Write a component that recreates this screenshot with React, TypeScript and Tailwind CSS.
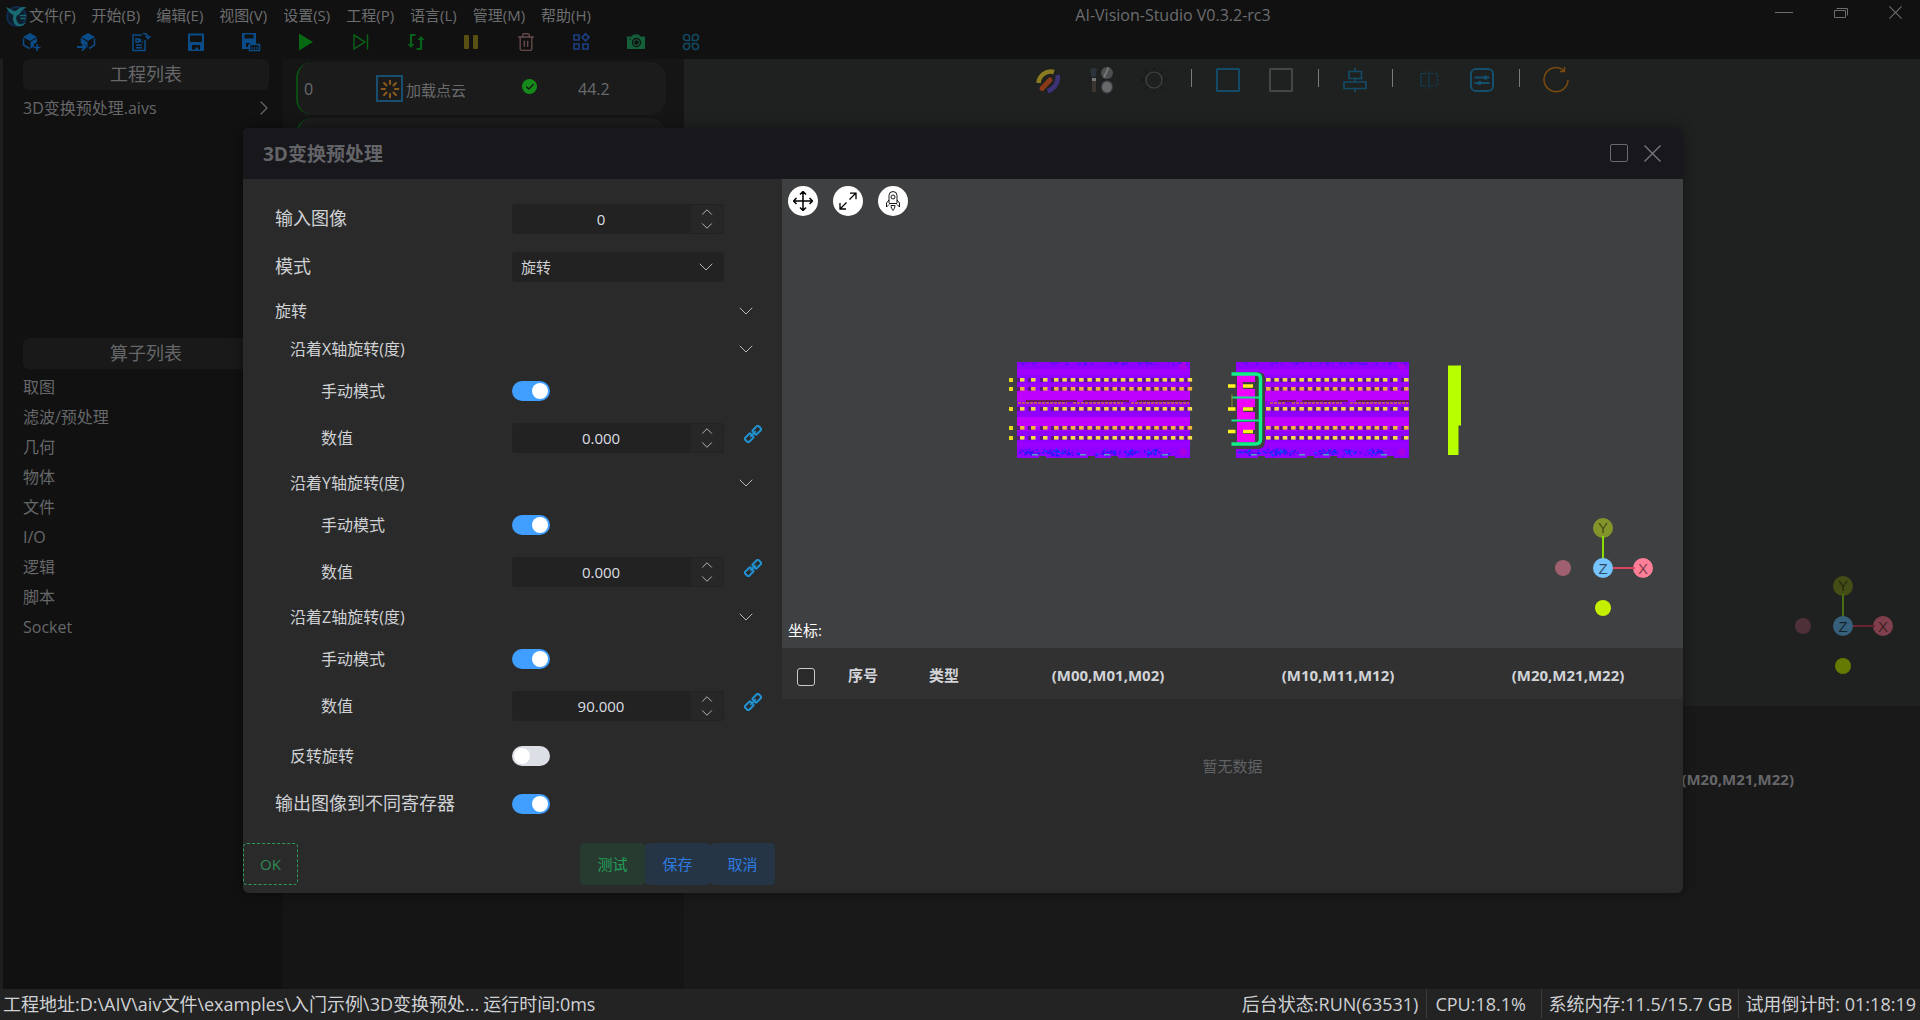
import React, { useId, useState } from "react";
import { Check, ChevronDown, ChevronRight, ChevronUp, Loader, Trash2 } from "lucide-react";

/* ---------- toolbar icons ---------- */

type IconProps = { className?: string };

const box = "size-5";

const CubeAdd = () => (
  <svg viewBox="0 0 20 20" className={box} fill="none">
    <path d="M9 1 2 5l7 4 7-4z" fill="#0b4c88" />
    <path d="M2.500 6.500v6.500l6 3.500" stroke="#0b4c88" strokeWidth="1.500" />
    <path d="M9.500 10l6.500-4v4l-3 2v2.500l-3.500 2z" fill="#0b4c88" />
    <path d="M16 12v7M12.500 15.500h7" stroke="#0b4c88" strokeWidth="1.600" />
  </svg>
);
const CubeImport = () => (
  <svg viewBox="0 0 20 20" className={box} fill="none">
    <path d="M12 1 5 5l7 4 7-4z" fill="#0b4c88" />
    <path d="M5.500 6v5M18.500 6.500v6.500L13 16.500" stroke="#0b4c88" strokeWidth="1.500" />
    <path d="M5 6l6.500 4v6L9.500 13 5 11z" fill="#0b4c88" />
    <path d="M1 15h8M6 11.500 9.500 15 6 18.500" stroke="#0b4c88" strokeWidth="1.800" />
  </svg>
);
const DocExport = () => (
  <svg viewBox="0 0 20 20" className={box} fill="none" stroke="#0b4c88" strokeWidth="1.500">
    <path d="M11 3H2v15.500h12V8" />
    <path d="M5 7h3v3H5zM5 13h6M5 15.800h6M9.500 7v3M11 10h1" />
    <path d="M12 1.500c3 0 5 1 5 4M14.500 4l2.500 2.500L19.500 4" />
  </svg>
);
const SaveIcon = () => (
  <svg viewBox="0 0 20 20" className={box} fill="none">
    <path d="M2 1.500h16V19H2z" fill="#0b4c88" />
    <path d="M4 3.500h12v6.500H4zM6 13h8v4.500h-2v-2H9.500v2H6z" fill="#111" />
  </svg>
);
const SaveAsIcon = () => (
  <svg viewBox="0 0 20 20" className={box} fill="none">
    <path d="M1 1h14v16H1z" fill="#0b4c88" />
    <path d="M3.500 2.500h9v4h-9zM5 11h4v2H7v2H5z" fill="#111" />
    <path d="M8.500 12.500h10v6h-10z" fill="#111" stroke="#0b4c88" strokeWidth="1.500" />
    <path d="M11 15v2M13.500 15v2M16 15v2" stroke="#0b4c88" strokeWidth="1.200" />
  </svg>
);
const PlayIcon = () => (
  <svg viewBox="0 0 20 20" className={box}>
    <path d="M3 1.500 17 10 3 18.500z" fill="#066a12" />
  </svg>
);
const StepIcon = () => (
  <svg viewBox="0 0 20 20" className={box} fill="none" stroke="#0a5f17" strokeWidth="1.500">
    <path d="M3 3 14 10 3 17zM16.500 2.500v15" />
  </svg>
);
const LoopIcon = () => (
  <svg viewBox="0 0 20 20" className={box} fill="none" stroke="#08611a" strokeWidth="2.200">
    <path d="M9.500 3H5v10M10.500 17H15V7" />
    <path d="M1.500 12h7L5 16zM11.500 8h7L15 4z" fill="#08611a" stroke="none" />
  </svg>
);
const PauseIcon = () => (
  <svg viewBox="0 0 20 20" className={box} fill="#594f12">
    <rect x="3" y="3" width="5" height="14" rx="1" />
    <rect x="12" y="3" width="5" height="14" rx="1" />
  </svg>
);
const AppsIcon = () => (
  <svg viewBox="0 0 20 20" className={box} fill="none" stroke="#1b3f80" strokeWidth="1.700">
    <path d="M3 3h5v5H3zM3 12h5v5H3zM12 12h5v5h-5zM14.500 1.800 18 5.300l-3.500 3.500L11 5.300z" />
  </svg>
);
const CameraIcon = () => (
  <svg viewBox="0 0 20 20" className={box}>
    <path d="M1 4.500h5L7 2.500h6l1 2h5V17H1z" fill="#14603a" />
    <circle cx="10.500" cy="10.500" r="4" fill="none" stroke="#111" strokeWidth="1.300" />
    <circle cx="10.500" cy="10.500" r="2.300" fill="#111" />
    <circle cx="4" cy="7" r=".8" fill="#111" />
  </svg>
);
const CloverIcon = () => (
  <svg viewBox="0 0 20 20" className={box} fill="none" stroke="#134a63" strokeWidth="1.600">
    <path d="M8.500 8.500H5.500a3 3 0 1 1 3-3zM11.500 8.500v-3a3 3 0 1 1 3 3zM8.500 11.500v3a3 3 0 1 1-3-3zM11.500 11.500h3a3 3 0 1 1-3 3z" />
  </svg>
);
const TrashIcon = () => <Trash2 className="size-5 text-[#634a49]" strokeWidth={1.700} />;

const toolbar: [string, React.FC][] = [
  ["新建工程", CubeAdd],
  ["导入工程", CubeImport],
  ["导出", DocExport],
  ["保存", SaveIcon],
  ["另存为", SaveAsIcon],
  ["运行", PlayIcon],
  ["单步", StepIcon],
  ["循环", LoopIcon],
  ["暂停", PauseIcon],
  ["删除", TrashIcon],
  ["应用", AppsIcon],
  ["截图", CameraIcon],
  ["布局", CloverIcon],
];

/* ---------- viewer icons ---------- */

const big = "size-7";

const PaletteIcon = () => (
  <svg viewBox="0 0 28 28" className={big} fill="none" strokeLinecap="butt">
    <path d="M4.500 17C5 10 12 3.500 20 6" stroke="#8a7a20" strokeWidth="4.500" />
    <path d="M23.500 9c1.500 6-2.500 14-10 16" stroke="#3b3278" strokeWidth="4.500" />
    <path d="M8 22.500 16 14" stroke="#8a3a18" strokeWidth="5" strokeLinecap="round" />
  </svg>
);
const BrushIcon = () => (
  <svg viewBox="0 0 28 28" className={big} fill="none">
    <path d="M3 3c2-1.500 5-1.500 7 0L8.500 11h-4z" fill="#2c333b" />
    <path d="M5 12h4v3H5z" fill="#777" />
    <path d="M5 15h4v11H5z" fill="#3b3632" />
    <circle cx="20" cy="7" r="6" fill="#4c4e50" />
    <path d="M17 11.500 21.500 1.500" stroke="#777" strokeWidth="2" />
    <ellipse cx="20" cy="21" rx="6.300" ry="6.800" fill="#34383e" />
    <ellipse cx="20" cy="21" rx="5" ry="5.500" fill="#66686a" />
  </svg>
);
const SunIcon = () => (
  <svg viewBox="0 0 28 28" className={big} fill="none">
    <circle cx="14" cy="14" r="8" stroke="#434543" strokeWidth="1.200" />
    <path d="M14 1.500v3M14 23.500v3M1.500 14h3M23.500 14h3M5 5l2 2M21 21l2 2M23 5l-2 2M7 21l-2 2" stroke="#151716" strokeWidth="1.500" />
  </svg>
);
const SquareShape = ({ className }: IconProps) => (
  <svg viewBox="0 0 28 28" className={className} fill="none" stroke="currentColor" strokeWidth="2">
    <rect x="3" y="3" width="22" height="22" rx=".5" />
  </svg>
);
const BlueSquare = () => <SquareShape className="size-7 text-[#134b67]" />;
const GreySquare = () => <SquareShape className="size-7 text-[#454545]" />;
const AlignIcon = () => (
  <svg viewBox="0 0 28 28" className={big} fill="none" stroke="#134b67" strokeWidth="1.700">
    <path d="M14 2v3M14 12.500V16M14 22.500V26M8 5.500h12.500v7H8zM3 16h22v6.500H3z" />
  </svg>
);
const MirrorIcon = () => (
  <svg viewBox="0 0 28 28" className={big} fill="none" stroke="#133d52" strokeWidth="1.200">
    <path d="M14 5v18M12 7.500H6v12.500h6" />
    <path d="M15.500 7.500h7v12.500h-7" strokeDasharray="2.500 1.500" />
  </svg>
);
const SettingsIcon = () => (
  <svg viewBox="0 0 28 28" className={big} fill="none" stroke="#13506e" strokeWidth="2">
    <rect x="3" y="3" width="22" height="22" rx="5" />
    <path d="M6.500 11.500h15M6.500 17h15" />
    <path d="M17.500 9.500v4M11.500 15v4" strokeWidth="3" />
  </svg>
);
const RotateIcon = () => (
  <svg viewBox="0 0 28 28" className={big} fill="none" stroke="#7a4a10" strokeWidth="1.500">
    <path d="M26 14A12 12 0 1 1 22 4.700M22.500 1v4.500H18" />
  </svg>
);

const viewerTools: ([string, React.FC] | null)[] = [
  ["调色", PaletteIcon],
  ["画笔", BrushIcon],
  ["亮度", SunIcon],
  null,
  ["矩形", BlueSquare],
  ["方框", GreySquare],
  null,
  ["对齐", AlignIcon],
  null,
  ["镜像", MirrorIcon],
  ["参数", SettingsIcon],
  null,
  ["重置", RotateIcon],
];

const Logo = () => (
  <svg viewBox="0 0 24 24" className="size-6 shrink-0" fill="none" aria-hidden="true">
    <circle cx="11.500" cy="12.500" r="9.500" fill="#0e1c2c" stroke="#102c4c" strokeWidth="2" />
    <path d="M1 3c3 1 5 3 8 4 2 .5 3-1 5-2.500C16 3 19 2.500 22 4c-3 0-5 2-6 4-1 2-3 3-4.500 4-1 2 0 5 1.500 7 2 2 5 2 8-1-2 5-9 6-12 1-1.500-3-1-6-.500-8C6 10 3 7 1 3z" fill="#1a6a72" />
    <path d="M15 11.500h6M15.500 14.500h5" stroke="#1a6a72" strokeWidth="1.700" />
  </svg>
);

const CloseMark = ({ className }: IconProps) => (
  <svg viewBox="0 0 17 17" className={className} fill="none" stroke="currentColor" strokeWidth="1.400">
    <path d="M.5.5l16 16M16.500.5l-16 16" />
  </svg>
);

const LinkIcon = () => (
  <svg viewBox="0 0 18 18" className="size-[18px]" fill="none" stroke="#2191cf" strokeWidth="2">
    <g transform="rotate(-45 9 9)">
      <rect x="-.5" y="6.200" width="8" height="5.600" rx="1" />
      <rect x="10.500" y="6.200" width="8" height="5.600" rx="1" />
      <path d="M5 9h8" strokeWidth="1.800" />
    </g>
  </svg>
);

/* ---------- axis gizmo ---------- */

function Gizmo({ dim = false }: { dim?: boolean }) {
  const c = dim
    ? { y: "#454d16", yl: "#496e10", ym: "#647a02", z: "#36607c", x: "#803f4c", xl: "#6b2230", xm: "#4d3038" }
    : { y: "#83942a", yl: "#8adc00", ym: "#c4f000", z: "#76c4ff", x: "#ff7f99", xl: "#d94560", xm: "#a06070" };
  return (
    <svg viewBox="0 0 100 100" className="size-[100px]" aria-label="坐标轴">
      <circle cx="50" cy="10" r="10" fill={c.y} />
      <path d="M50 50V18" stroke={c.yl} strokeWidth="2" />
      <circle cx="90" cy="50" r="10" fill={c.x} />
      <path d="M50 50H82" stroke={c.xl} strokeWidth="2" />
      <circle cx="10" cy="50" r="8" fill={c.xm} />
      <circle cx="50" cy="90" r="8" fill={c.ym} />
      <circle cx="50" cy="50" r="10" fill={c.z} />
      <g fontFamily="Liberation Sans, sans-serif" fontSize="15" textAnchor="middle" fill="#000">
        <text x="50" y="15" fillOpacity=".5">Y</text>
        <text x="50" y="55.500" fillOpacity=".65">Z</text>
        <text x="90" y="55.500" fillOpacity=".55">X</text>
      </g>
    </svg>
  );
}

/* ---------- point cloud ---------- */

function noise(seed: number) {
  let s = seed;
  return () => {
    s = (s * 16807) % 2147483647;
    return s / 2147483647;
  };
}

const rowsY = [380, 389, 409, 428, 438];
const rowFill = ["#f5dc4e", "#f0b040", "#f8d84a", "#f2b83c", "#f5e04a"];

function Board({ x, dots, seed, lineStart }: { x: number; dots: number[]; seed: number; lineStart: number }) {
  const rnd = noise(seed);
  const clusters = [12, 36, 50, 90, 112, 138];
  const specks = Array.from({ length: 170 }, () => {
    const c = clusters[Math.floor(rnd() * clusters.length)];
    return [
      x + Math.min(168, Math.max(2, c + (rnd() + rnd() - 1) * 13)),
      448 + (rnd() + rnd()) * 4,
      1 + rnd() * 1.500,
      rnd(),
    ];
  });
  const topSpecks = Array.from({ length: 45 }, () => [x + 3 + rnd() * 166, 362 + rnd() * 2, 1 + rnd() * 2]);
  return (
    <g>
      <rect x={x} y="362" width="173" height="96" fill="#9000ff" />
      <rect x={x} y="369" width="173" height="6" fill="#a000ff" />
      <rect x={x} y="383" width="173" height="5" fill="#9c00ff" />
      <rect x={x} y="390" width="173" height="11" fill="#be00ff" />
      <rect x={x} y="401" width="173" height="5" fill="#9a00f0" />
      <rect x={x} y="417" width="173" height="10" fill="#c000ff" />
      <rect x={x} y="427" width="173" height="4" fill="#a800ff" />
      <rect x={x} y="442" width="173" height="5" fill="#9a00ff" />
      <circle cx={x + 166} cy="366" r="4" fill="#a800e6" />
      <circle cx={x + 166} cy="452" r="4" fill="#a800e6" />
      <path d={`M${lineStart + 8} 401H${x + 60}M${x + 66} 401H${x + 112}M${x + 120} 401H${x + 173}`} stroke="#6a1a5a" strokeWidth="2" />
      <path d={`M${lineStart} 403H${x + 50}M${x + 56} 403H${x + 106}M${x + 114} 403H${x + 172}`} stroke="#c87048" strokeWidth="1.500" strokeDasharray="3 1" />
      {topSpecks.map(([a, b, w], i) => (
        <rect key={i} x={a} y={b} width={w} height="1.200" fill="#4a10f0" />
      ))}
      {specks.map(([a, b, w, k], i) => (
        <rect key={i} x={a} y={b} width={w} height="1.500" fill={k > 0.6 ? "#1a20ff" : k > 0.2 ? "#4a08f0" : "#0a50f0"} />
      ))}
      {[18, 66, 90, 148].map((d) => (
        <rect key={d} x={x + d - 3} y="454" width="6" height="1.500" fill="#5aa0c0" />
      ))}
      {[25, 74, 97, 154].map((d) => (
        <rect key={d} x={x + d - 3} y="456" width="7" height="2" fill="#3f4041" />
      ))}
      {rowsY.map((y, r) =>
        dots.map((d) => (
          <g key={`${r}-${d}`}>
            <rect x={d - 5} y={y - 2} width="4" height="4" fill="#5a1880" />
            <rect x={d - 2} y={y - 2} width="4.500" height="3.600" fill={rowFill[r]} />
          </g>
        )),
      )}
    </g>
  );
}

const dotsA = [1022, 1033, 1045, ...Array.from({ length: 17 }, (_, i) => 1056 + i * 8.350)];
const dotsB = [...Array.from({ length: 15 }, (_, i) => 1268 + i * 8.350), 1395, 1406];

function PointCloud() {
  return (
    <svg viewBox="782 179 901 469" className="block h-full w-full" aria-label="点云">
      <Board x={1017} dots={dotsA} seed={17} lineStart={1018} />
      {rowsY.map((y) => (
        <rect key={y} x="1009" y={y - 2} width="4" height="4" fill="#e8d820" />
      ))}
      <Board x={1236} dots={dotsB} seed={91} lineStart={1270} />
      <path d="M1236 372h22q7 0 7 7v62q0 8-7 8h-22z" fill="#3f4041" />
      <path d="M1237 374h18v8h-18zM1237 389h18v8h-18zM1237 399h18v8h-18zM1237 412h18v8h-18zM1237 422h18v8h-18zM1237 434h18v8h-18z" fill="#f000ff" />
      <path d="M1237 382h6v7h-6zM1237 397h18v2h-18zM1237 407h6v5h-6zM1237 430h6v4h-6z" fill="#e000f0" />
      <path d="M1231.500 374H1256q4.500 0 4.500 4.500V439q0 5-5 5h-24" fill="none" stroke="#10f08a" strokeWidth="3.500" />
      <path d="M1231.500 397.500H1259M1231.500 420.500H1259" stroke="#10e890" strokeWidth="2" />
      <path d="M1232 394v14" stroke="#8a8a20" strokeWidth="1" />
      <path d="M1228 386h7.500M1228 409h7.500M1228 431.500h7.500M1243 386h10M1243 409h10M1243 431.500h10" stroke="#fff020" strokeWidth="3.500" />
      <path d="M1448 365.500h13v60h-2.500V455H1448z" fill="#b8ff00" />
    </svg>
  );
}

/* ---------- form controls ---------- */

function NumberBox({ id, initial, label, decimals = 0 }: { id: string; initial: number; label: string; decimals?: number }) {
  const [text, setText] = useState(initial.toFixed(decimals));
  const step = (d: number) => setText((Number(text) + d).toFixed(decimals));
  return (
    <div className="flex h-[30px] w-[212px] overflow-hidden rounded bg-[#222] p-px">
      <input
        id={id}
        aria-label={label}
        value={text}
        onChange={(e) => setText(e.target.value)}
        className="min-w-0 flex-1 bg-transparent pr-0.5 text-center text-[15px] font-medium text-[#dcdee2] outline-none"
      />
      <div className="flex w-8 flex-col rounded-r bg-[#272727] text-[#b5b7ba]">
        <button aria-label="增加" onClick={() => step(1)} className="flex h-3.5 items-center justify-center">
          <ChevronUp className="size-[18px]" strokeWidth={1.300} />
        </button>
        <button aria-label="减少" onClick={() => step(-1)} className="flex h-3.5 items-center justify-center">
          <ChevronDown className="size-[18px]" strokeWidth={1.300} />
        </button>
      </div>
    </div>
  );
}

function Switch({ id, initial }: { id: string; initial: boolean }) {
  const [on, setOn] = useState(initial);
  return (
    <input
      id={id}
      type="checkbox"
      role="switch"
      checked={on}
      onChange={() => setOn(!on)}
      className="flex h-5 w-[38px] appearance-none items-center rounded-full bg-[#dcdfe6] px-0.5 before:size-4 before:rounded-full before:bg-white checked:justify-end checked:bg-[#409eff]"
    />
  );
}

function SwitchRow({ label, on, labelClass, rowClass }: { label: string; on: boolean; labelClass: string; rowClass: string }) {
  const id = useId();
  return (
    <div className={`flex items-center ${rowClass}`}>
      <label htmlFor={id} className={`w-[269px] shrink-0 ${labelClass}`}>
        {label}
      </label>
      <Switch id={id} initial={on} />
    </div>
  );
}

function SectionHead({ label, className }: { label: string; className: string }) {
  return (
    <button className={`flex h-10 w-full items-center justify-between pr-6 text-left text-base ${className}`}>
      {label}
      <ChevronDown className="size-6 text-[#b4b6ba]" strokeWidth={1} />
    </button>
  );
}

function AxisSection({ axis, value }: { axis: string; value: number }) {
  const id = useId();
  return (
    <section>
      <SectionHead label={`沿着${axis}轴旋转(度)`} className="pb-1 pl-[47px]" />
      <SwitchRow label="手动模式" on labelClass="pl-[78px] text-base" rowClass="h-10" />
      <div className="flex h-[54px] items-center">
        <label htmlFor={id} className="w-[269px] shrink-0 pl-[78px] text-base">
          数值
        </label>
        <NumberBox id={id} initial={value} label={`${axis}轴数值`} decimals={3} />
        <button aria-label="关联变量" className="ml-5 pb-2">
          <LinkIcon />
        </button>
      </div>
    </section>
  );
}

function ParameterForm() {
  return (
    <div className="flex w-[539px] shrink-0 flex-col pt-4 pb-2 text-[#cfd1d4]">
      <div className="flex h-12 items-center">
        <label htmlFor="input-image" className="w-[269px] pb-0.5 pl-8 text-lg">
          输入图像
        </label>
        <NumberBox id="input-image" initial={0} label="输入图像" />
      </div>
      <div className="flex h-12 items-center">
        <label htmlFor="mode" className="w-[269px] pb-0.5 pl-8 text-lg">
          模式
        </label>
        <div className="relative w-[212px]">
          <select id="mode" className="h-[30px] w-full appearance-none rounded bg-[#222] pl-[9px] text-[15px] outline-none">
            <option>旋转</option>
          </select>
          <ChevronDown className="pointer-events-none absolute top-[3px] right-1.5 size-6 text-[#b4b6ba]" strokeWidth={1} />
        </div>
      </div>
      <SectionHead label="旋转" className="pl-8" />
      <AxisSection axis="X" value={0} />
      <AxisSection axis="Y" value={0} />
      <AxisSection axis="Z" value={90} />
      <SwitchRow label="反转旋转" on={false} labelClass="pl-[47px] text-base" rowClass="h-[46px]" />
      <SwitchRow label="输出图像到不同寄存器" on labelClass="pb-0.5 pl-8 text-lg" rowClass="h-[50px]" />
      <div className="mt-3.5 flex h-[42px] justify-between pr-[7px] text-[15px]">
        <button className="w-[55px] rounded border border-dashed border-[#2f9a5c] text-[#2f8a55]">OK</button>
        <div className="flex">
          <button className="w-[65px] rounded bg-[#273a2f] text-[#22a05a]">测试</button>
          <button className="w-[65px] rounded bg-[#263546] text-[#2d7be0]">保存</button>
          <button className="w-[65px] rounded bg-[#263546] text-[#2d7be0]">取消</button>
        </div>
      </div>
    </div>
  );
}

const roundBtn = "flex size-[30px] items-center justify-center rounded-full bg-white text-black";

function ModalViewer() {
  return (
    <div className="flex min-w-0 flex-1 flex-col">
      <div className="relative h-[469px] bg-[#3f4041]">
        <PointCloud />
        <div className="absolute top-[7px] left-1.5 flex gap-[15px]">
          <button aria-label="平移" className={roundBtn}>
            <svg viewBox="0 0 20 20" className="size-5" fill="none" stroke="currentColor" strokeWidth="1.500">
              <path d="M10 .8v18.400M.8 10h18.400M7 3.500l3-3 3 3M7 16.500l3 3 3-3M3.500 7l-3 3 3 3M16.500 7l3 3-3 3" />
            </svg>
          </button>
          <button aria-label="全屏" className={roundBtn}>
            <svg viewBox="0 0 20 20" className="size-5" fill="none" stroke="currentColor" strokeWidth="1.300">
              <path d="M11.500 8.500l6-6M12 2.200h6v6M8.500 11.500l-6.500 6.500M2 12v6h6" />
            </svg>
          </button>
          <button aria-label="复位" className={roundBtn}>
            <svg viewBox="0 0 20 20" className="size-5" fill="none" stroke="currentColor" strokeWidth=".9">
              <path d="M6 12V4.500a4 4 0 0 1 8 0V12M6 12.500h8M6 9l-2.500 3v4L6 13.500M14 9l2.500 3v4L14 13.500M8 14.500h4c0 2-1 3.500-2 5-1-1.500-2-3-2-5z" />
              <circle cx="10" cy="6" r="2" />
            </svg>
          </button>
        </div>
        <div className="absolute right-[30px] bottom-[30px]">
          <Gizmo />
        </div>
        <p className="absolute bottom-[7px] left-1.5 text-[15px] leading-[22px] text-white">坐标:</p>
      </div>
      <table className="w-full table-fixed text-[15px] text-[#d2d4d8]">
        <thead>
          <tr className="h-[51px] bg-[#313131]">
            <th className="w-[49px] pt-1.5">
              <input
                type="checkbox"
                aria-label="全选"
                className="ml-[15px] block size-[18px] appearance-none rounded-[3px] border border-[#c8cacd] bg-[#2a2a2a] checked:bg-[#409eff]"
              />
            </th>
            <th className="w-16 pt-1 font-bold">序号</th>
            <th className="w-[98px] pt-1 font-bold">类型</th>
            <th className="pt-1 font-bold">(M00,M01,M02)</th>
            <th className="pt-1 font-bold">(M10,M11,M12)</th>
            <th className="pt-1 font-bold">(M20,M21,M22)</th>
          </tr>
        </thead>
        <tbody>
          <tr>
            <td colSpan={6} className="h-[134px] text-center text-[#606265]">
              暂无数据
            </td>
          </tr>
        </tbody>
      </table>
    </div>
  );
}

function Modal() {
  return (
    <div className="absolute inset-0 flex items-start justify-center pt-32 pl-1.5">
      <div role="dialog" aria-label="3D变换预处理" className="w-[75vw] overflow-hidden rounded-md bg-[#2a2a2a] shadow-[0_0_12px_rgba(0,0,0,0.4)]">
        <header className="flex h-[51px] items-center justify-between bg-[#18171c] pr-[22px] pl-5 text-[#636468]">
          <h2 className="pt-0.5 text-[19px] font-bold">3D变换预处理</h2>
          <div className="flex items-center gap-4 pb-px">
            <button aria-label="最大化" className="size-[18px] rounded-[2px] border border-[#6a6a6e]" />
            <button aria-label="关闭">
              <CloseMark className="size-[17px] text-[#77777b]" />
            </button>
          </div>
        </header>
        <div className="flex">
          <ParameterForm />
          <ModalViewer />
        </div>
      </div>
    </div>
  );
}

/* ---------- main window ---------- */

const menus = ["文件(F)", "开始(B)", "编辑(E)", "视图(V)", "设置(S)", "工程(P)", "语言(L)", "管理(M)", "帮助(H)"];
const operators = ["取图", "滤波/预处理", "几何", "物体", "文件", "I/O", "逻辑", "脚本", "Socket"];

function TitleBar() {
  return (
    <header className="h-[59px] shrink-0">
      <div className="flex h-[31px] items-center justify-between pl-[5px] text-[#6c6d6f]">
        <div className="flex items-center">
          <Logo />
          <nav className="flex gap-4 text-[15px]">
            {menus.map((m) => (
              <button key={m}>{m}</button>
            ))}
          </nav>
        </div>
        <h1 className="pr-5 pb-0.5 text-base">AI-Vision-Studio V0.3.2-rc3</h1>
        <div className="flex items-center gap-10 pr-[18px] pb-1.5">
          <button aria-label="最小化" className="flex h-4 w-[18px] items-center">
            <span className="h-px w-full bg-[#6c6d6f]" />
          </button>
          <button aria-label="还原">
            <svg viewBox="0 0 16 16" className="size-4" fill="none" stroke="currentColor">
              <path d="M1.500 5.500h11v7h-11zM3.500 3.500h11v7" />
            </svg>
          </button>
          <button aria-label="关闭窗口">
            <CloseMark className="size-[13px]" />
          </button>
        </div>
      </div>
      <div className="flex h-[22px] items-center gap-[35px] pl-[21px]">
        {toolbar.map(([name, Icon]) => (
          <button key={name} aria-label={name}>
            <Icon />
          </button>
        ))}
      </div>
    </header>
  );
}

function Sidebar() {
  return (
    <aside className="flex w-[283px] shrink-0 flex-col border-l-3 border-[#1e1e1e] pr-3.5 pl-5 text-[#666769]">
      <section className="h-[279px]">
        <h2 className="flex h-[31px] items-center justify-center rounded-md bg-[#191919] pb-0.5 text-lg">工程列表</h2>
        <button className="-mr-2 flex h-9 w-[253px] items-center justify-between text-base">
          3D变换预处理.aivs
          <ChevronRight className="size-6" strokeWidth={1.200} />
        </button>
      </section>
      <section>
        <h2 className="flex h-[31px] items-center justify-center rounded-md bg-[#191919] pb-0.5 text-lg">算子列表</h2>
        <ul className="pt-[3px] text-base">
          {operators.map((o) => (
            <li key={o} className="flex h-[30px] items-center">
              {o}
            </li>
          ))}
        </ul>
      </section>
    </aside>
  );
}

const card = "flex h-[53px] shrink-0 items-center rounded-2xl border-l-2 border-[#0a4d12] bg-[#1b1b1b]";

function Flow() {
  return (
    <main className="flex w-[401px] shrink-0 flex-col gap-[3px] bg-[#151515] pt-[3px] pr-[18px] pl-[13px] text-[#696a6c]">
      <div className={card}>
        <span className="w-[78px] pl-1.5 text-base">0</span>
        <span className="flex size-[27px] items-center justify-center border-2 border-[#184f70]">
          <Loader className="size-5 text-[#8a5a1c]" strokeWidth={2.500} />
        </span>
        <span className="w-[119px] pt-1 pl-[3px] text-[15px]">加载点云</span>
        <span className="mb-1 flex size-[15px] items-center justify-center rounded-full bg-[#158a1b]">
          <Check className="size-2.5 text-[#1b1b1b]" strokeWidth={3.500} />
        </span>
        <span className="pl-[41px] text-base">44.2</span>
      </div>
      <div className={card} />
    </main>
  );
}

function Workspace() {
  return (
    <div className="flex min-w-0 flex-1 flex-col bg-[#191919]">
      <div className="relative h-[647px] shrink-0 bg-[#1f2120]">
        <div className="flex h-[42px] items-center justify-center">
          {viewerTools.map((t, i) => {
            if (!t) return <span key={i} className="mx-[10px] mb-1 h-[18px] w-px bg-[#7a7b7b]" />;
            const [name, Icon] = t;
            return (
              <button key={name} aria-label={name} className="flex w-[53px] justify-center">
                <Icon />
              </button>
            );
          })}
        </div>
        <div className="absolute right-[27px] bottom-[30px]">
          <Gizmo dim />
        </div>
      </div>
      <p className="flex justify-end pt-[62px] pr-[126px] text-[15px] leading-[22px] font-bold text-[#66676a]">(M20,M21,M22)</p>
    </div>
  );
}

function StatusBar() {
  return (
    <footer className="flex h-[31px] shrink-0 items-stretch justify-between bg-[#232323] pb-0.5 text-lg text-[#cfd1d4]">
      <div className="flex items-center gap-1 pl-[3px]">
        <span>工程地址:D:\AIV\aiv文件\examples\入门示例\3D变换预处...</span>
        <span>运行时间:0ms</span>
      </div>
      <div className="flex items-stretch">
        <span className="flex items-center border-r border-[#3c3c3c] px-2">后台状态:RUN(63531)</span>
        <span className="flex w-[115px] items-center border-r border-[#3c3c3c] pl-2">CPU:18.1%</span>
        <span className="flex items-center border-r border-[#3c3c3c] px-1.5">系统内存:11.5/15.7 GB</span>
        <span className="flex items-center pr-1 pl-1.5">试用倒计时: 01:18:19</span>
      </div>
    </footer>
  );
}

export default function App() {
  return (
    <div className="relative flex h-screen flex-col overflow-hidden bg-[#111] font-['Open_Sans','Noto_Sans_CJK_SC',sans-serif] whitespace-nowrap">
      <TitleBar />
      <div className="flex min-h-0 flex-1 overflow-hidden">
        <Sidebar />
        <Flow />
        <Workspace />
      </div>
      <StatusBar />
      <Modal />
    </div>
  );
}
